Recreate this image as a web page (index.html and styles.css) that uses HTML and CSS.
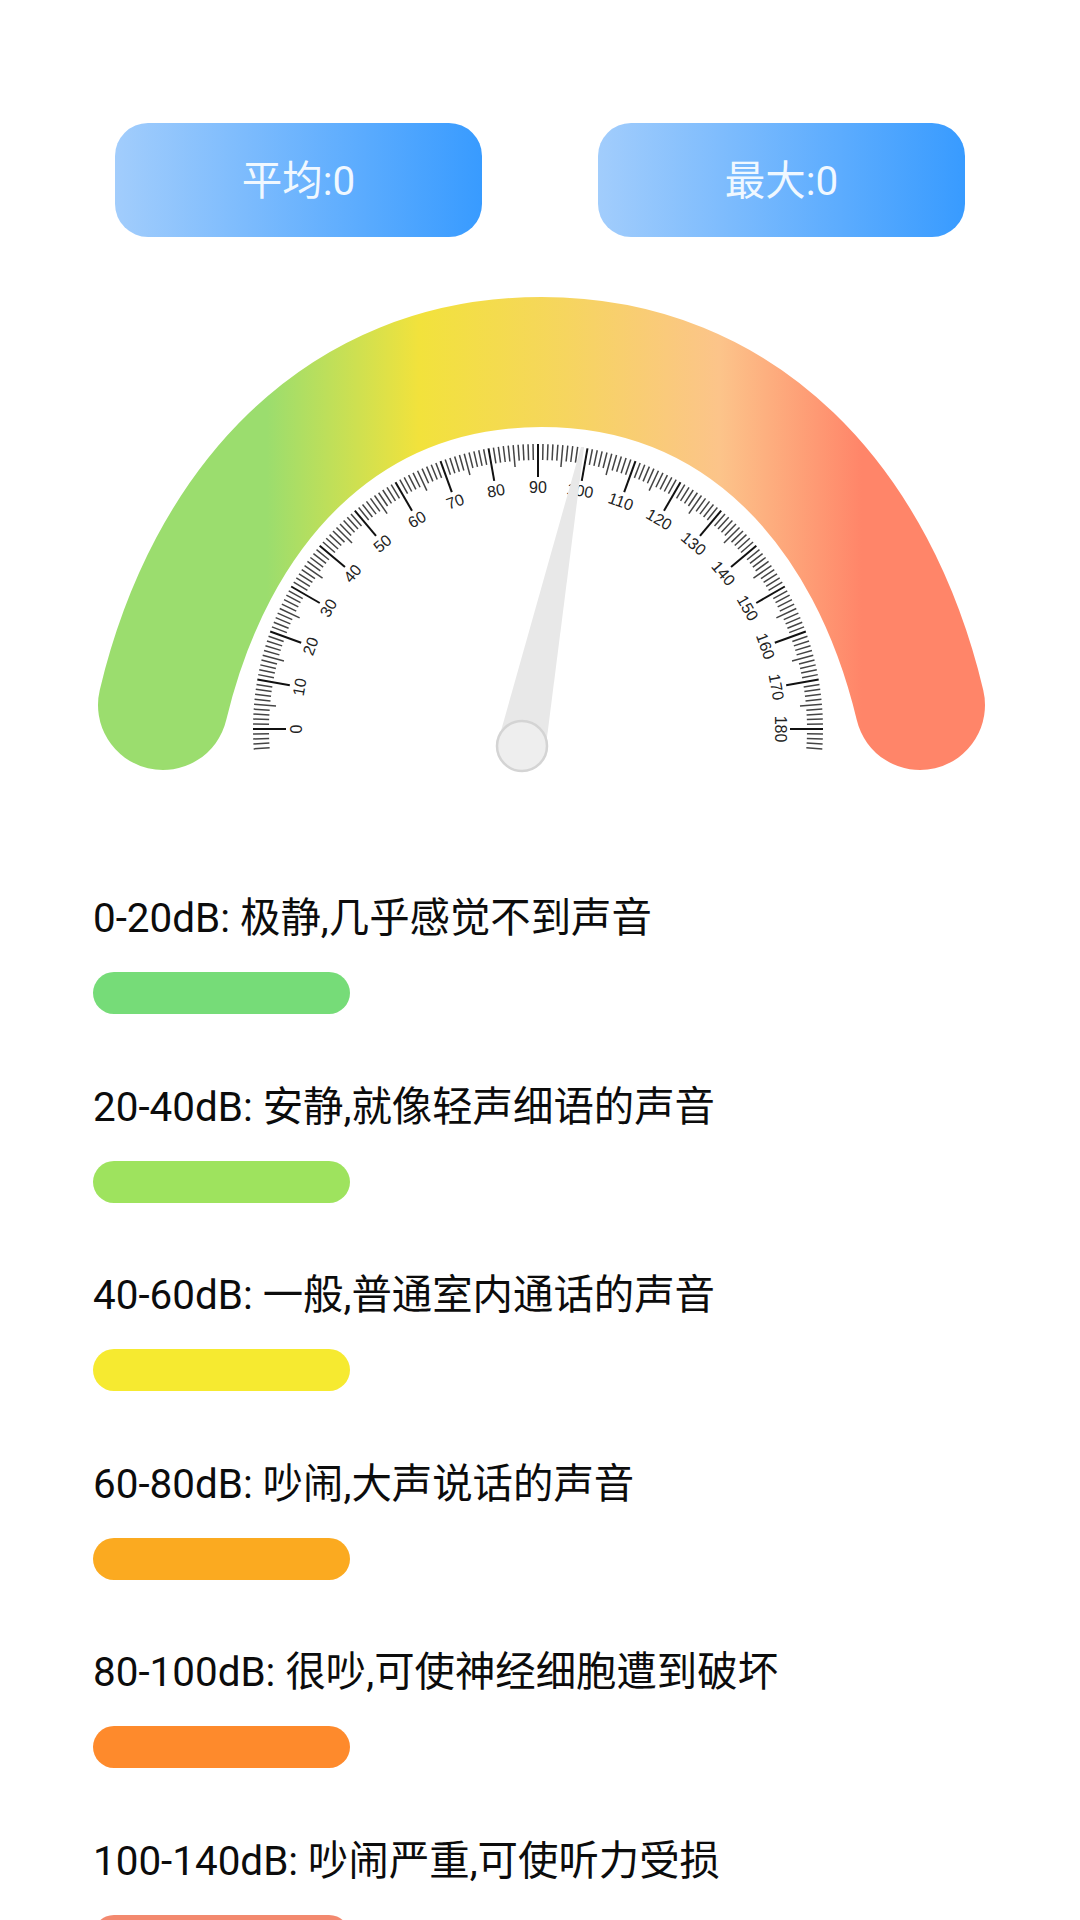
FILE: index.html
```html
<!DOCTYPE html>
<html lang="zh">
<head>
    <meta charset="UTF-8">
    <meta name="viewport" content="width=device-width, initial-scale=1.0">
    <title>Document</title>
    <link rel="stylesheet" href="styles.css">
</head>
<body>
    <div class="stats">
        <div class="stat">平均:0</div>
        <div class="stat">最大:0</div>
    </div>

    <svg class="gauge" viewBox="0 280 1080 520">
        <defs>
            <linearGradient id="arcColor" gradientUnits="userSpaceOnUse" x1="98" y1="0" x2="986" y2="0">
                <stop offset="0.19" stop-color="#9bdd6e"></stop>
                <stop offset="0.362" stop-color="#f2e23c"></stop>
                <stop offset="0.528" stop-color="#f6d55f"></stop>
                <stop offset="0.70" stop-color="#fcc48a"></stop>
                <stop offset="0.86" stop-color="#ff8569"></stop>
            </linearGradient>
        </defs>
        <path class="arc" d="M163 705 C210 508 340 362 541.5 362 C743 362 873 508 920 705"></path>
        <g id="ticks"></g>
        <polygon class="needle" points="581,447 584,447 546,745 497,745"></polygon>
        <circle class="hub" cx="522" cy="746" r="25"></circle>
    </svg>

    <div class="legend">
        <div class="level">
            <div class="level-text">0-20dB: 极静,几乎感觉不到声音</div>
            <div class="level-bar bar1"></div>
        </div>
        <div class="level">
            <div class="level-text">20-40dB: 安静,就像轻声细语的声音</div>
            <div class="level-bar bar2"></div>
        </div>
        <div class="level">
            <div class="level-text">40-60dB: 一般,普通室内通话的声音</div>
            <div class="level-bar bar3"></div>
        </div>
        <div class="level">
            <div class="level-text">60-80dB: 吵闹,大声说话的声音</div>
            <div class="level-bar bar4"></div>
        </div>
        <div class="level">
            <div class="level-text">80-100dB: 很吵,可使神经细胞遭到破坏</div>
            <div class="level-bar bar5"></div>
        </div>
        <div class="level">
            <div class="level-text">100-140dB: 吵闹严重,可使听力受损</div>
            <div class="level-bar bar6"></div>
        </div>
    </div>

    <script src="gauge.js"></script>
</body>
</html>
```

FILE: styles.css
```css
html, body {margin: 0; padding: 0; height: 1920px; overflow: hidden; background: #fff;}
body {font-family: Roboto, "Noto Sans CJK SC", sans-serif; color: #0c0c0c;}

.stats {display: flex; justify-content: space-between; padding: 123px 115px 0;}
.stat {width: 367px; height: 114px; line-height: 118px; text-align: center; font-size: 40.4px; color: #f0f8ff; border-radius: 33px; background: linear-gradient(90deg, #a2cdfc, #389bff);}

.gauge {display: block; width: 1080px; height: 520px; margin-top: 43px;}
.arc {fill: none; stroke: url(#arcColor); stroke-width: 130; stroke-linecap: round;}
.needle {fill: #e8e8e8;}
.hub {fill: #eeeeee; stroke: #d4d4d4; stroke-width: 2.5;}
.tick {stroke: #444;}
.tick-major {stroke: #111;}
.tick-label {font-family: "Liberation Sans", sans-serif; font-size: 16px; fill: #222; text-anchor: middle; dominant-baseline: central;}

.legend {padding: 92px 0 0 93px;}
.level {height: 188.6px;}
.level-text {font-size: 40.4px; line-height: 53px;}
.level-bar {width: 257px; height: 42px; margin-top: 27px; border-radius: 21px;}
.bar1 {background: #76dc78;}
.bar2 {background: #9ee35e;}
.bar3 {background: #f6ea30;}
.bar4 {background: #fbaa20;}
.bar5 {background: #fe8a2c;}
.bar6 {background: #f3896f;}
```

FILE: gauge.js
```js
window.onload = function () {
    var oTicks = document.getElementById('ticks');
    var NS = 'http://www.w3.org/2000/svg';
    var cx = 538;
    var cy = 729;
    var R = 285;

    for (var v = -4; v <= 184; v++) {
        var a = v * Math.PI / 180;
        var major = v % 10 == 0;
        var len = major ? 33 : (v % 5 == 0 ? 22 : 16);

        var oLine = document.createElementNS(NS, 'line');
        oLine.setAttribute('x1', cx - R * Math.cos(a));
        oLine.setAttribute('y1', cy - R * Math.sin(a));
        oLine.setAttribute('x2', cx - (R - len) * Math.cos(a));
        oLine.setAttribute('y2', cy - (R - len) * Math.sin(a));
        oLine.setAttribute('stroke-width', major ? 2 : 1.5);
        oLine.setAttribute('class', major ? 'tick tick-major' : 'tick');
        oTicks.appendChild(oLine);

        if (major && v >= 0 && v <= 180) {
            var x = cx - 242 * Math.cos(a);
            var y = cy - 242 * Math.sin(a);
            var oText = document.createElementNS(NS, 'text');
            oText.setAttribute('x', x);
            oText.setAttribute('y', y);
            oText.setAttribute('class', 'tick-label');
            oText.setAttribute('transform', 'rotate(' + (v - 90) + ' ' + x + ' ' + y + ')');
            oText.textContent = v;
            oTicks.appendChild(oText);
        }
    }
};
```
